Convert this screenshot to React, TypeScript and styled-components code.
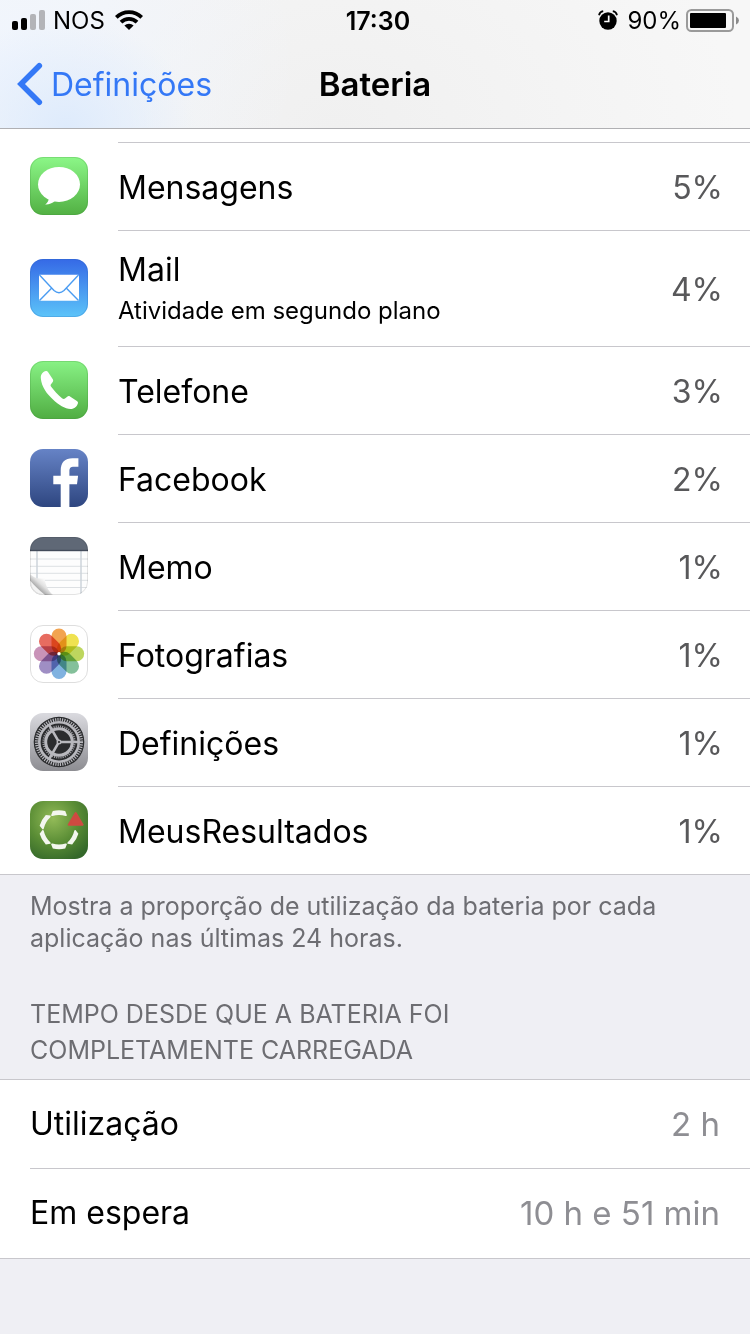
import React from 'react';
import styled, { createGlobalStyle } from 'styled-components';

const GlobalStyle = createGlobalStyle`
  *, *::before, *::after { box-sizing: border-box; }
  body {
    margin: 0;
    background: #efeff4;
    color: #000;
    font-family: Inter, "Liberation Sans", sans-serif;
  }
  ul, dl, dd, h1, h2, p { margin: 0; padding: 0; }
`;

const Page = styled.div`
  min-height: 100vh;
  display: flex;
  flex-direction: column;
`;

const Header = styled.header`
  border-bottom: 1px solid #b0b0b3;
  background:
    radial-gradient(ellipse 130px 110px at 66px 128px, #deebfc 0%, rgba(222, 235, 252, 0) 100%),
    radial-gradient(ellipse 300px 260px at 0 60px, #f0f5fd 0%, rgba(240, 245, 253, 0) 100%),
    radial-gradient(ellipse 400px 300px at 45% 128px, #f0f0f0 0%, rgba(247, 247, 247, 0) 100%),
    #f7f7f7;
`;

const StatusBar = styled.div`
  display: grid;
  grid-template-columns: 1fr auto 1fr;
  align-items: center;
  height: 40px;
  padding: 0 10px 0 12px;
  font-size: 24px;
  line-height: 32px;
`;

const StatusGroup = styled.div<{ $end?: boolean }>`
  display: flex;
  align-items: center;
  justify-content: ${p => (p.$end ? 'flex-end' : 'flex-start')};
  gap: ${p => (p.$end ? '5px' : '7px')};
`;

const Carrier = styled.span`
  padding: 2px 3px 0 0;
`;

const Percent = styled.span`
  padding: 2px 0 0 4px;
`;

const Clock = styled.time`
  padding: 2px 0 0 4px;
  font-size: 25px;
  font-weight: 600;
`;

const NavBar = styled.nav`
  display: grid;
  grid-template-columns: 1fr auto 1fr;
  align-items: center;
  height: 88px;
  padding: 0 17px;
`;

const BackLink = styled.a`
  display: flex;
  align-items: center;
  gap: 8px;
  justify-self: start;
  color: #3478f6;
  font-size: 32px;
  line-height: 40px;
  text-decoration: none;
`;

const BackLabel = styled.span`
  padding-top: 2px;
`;

const Title = styled.h1`
  font-size: 33px;
  line-height: 40px;
  font-weight: 600;
`;

const AppList = styled.ul`
  list-style: none;
  padding-top: 13px;
  background: #fff;
  border-bottom: 1px solid #c8c7cc;
`;

const AppRow = styled.li`
  display: flex;
  align-items: center;
  gap: 30px;
  padding-left: 30px;
`;

const AppBody = styled.div<{ $tall: boolean }>`
  flex: 1;
  display: flex;
  align-items: center;
  justify-content: space-between;
  min-height: ${p => (p.$tall ? '116px' : '88px')};
  padding: 2px 27px 0 0;
  border-top: 1px solid #c8c7cc;
`;

const AppName = styled.div`
  font-size: 32px;
  line-height: 40px;
`;

const AppNote = styled.div`
  padding: 5px 0 3px;
  font-size: 24px;
  line-height: 32px;
`;

const Share = styled.div`
  color: #58585a;
  font-size: 32px;
  line-height: 40px;
`;

const Note = styled.p`
  padding: 15px 30px 0;
  color: #6d6d72;
  font-size: 25px;
  line-height: 32px;
`;

const SectionTitle = styled.h2`
  max-width: 560px;
  padding: 42px 30px 11px;
  color: #6d6d72;
  font-size: 25px;
  line-height: 36px;
  font-weight: 400;
`;

const Stats = styled.dl`
  background: #fff;
  border-top: 1px solid #c8c7cc;
  border-bottom: 1px solid #c8c7cc;
  padding: 0 0 1px 30px;
`;

const Stat = styled.div`
  display: flex;
  align-items: center;
  justify-content: space-between;
  box-sizing: content-box;
  height: 88px;
  padding-right: 30px;
  font-size: 32px;
  line-height: 40px;
  & + & { border-top: 1px solid #c8c7cc; }
`;

const StatValue = styled.dd`
  color: #8e8e93;
  font-size: 33px;
`;

const IconSvg = styled.svg`
  display: block;
  flex: none;
  width: 58px;
  height: 58px;
`;

const ROUND = { width: 58, height: 58, rx: 13 };

function Gradient({ id, from, to }: { id: string; from: string; to: string }) {
  return (
    <linearGradient id={id} x1="0" y1="0" x2="0" y2="1">
      <stop offset="0" stopColor={from} />
      <stop offset="1" stopColor={to} />
    </linearGradient>
  );
}

function MessagesIcon() {
  return (
    <IconSvg viewBox="0 0 58 58" aria-hidden="true">
      <defs><Gradient id="msg" from="#8cf788" to="#52b043" /></defs>
      <rect {...ROUND} fill="url(#msg)" />
      <rect x=".5" y=".5" width="57" height="57" rx="12.5" fill="none" stroke="#3f8f3a" strokeOpacity=".25" />
      <ellipse cx="29" cy="27.4" rx="21" ry="17.5" fill="#fff" />
      <path d="M19 41C18.500 44 17.500 46 15.200 47.500C18.500 47.800 22 46.500 25 44Z" fill="#fff" />
    </IconSvg>
  );
}

function MailIcon() {
  return (
    <IconSvg viewBox="0 0 58 58" aria-hidden="true">
      <defs><Gradient id="mail" from="#3569e6" to="#5cc4f9" /></defs>
      <rect {...ROUND} fill="url(#mail)" />
      <rect x=".5" y=".5" width="57" height="57" rx="12.5" fill="none" stroke="#2b62b8" strokeOpacity=".25" />
      <rect x="9" y="15.700" width="40" height="26" rx="1" fill="#fff" />
      <g fill="none" stroke="#4a9cf2" strokeWidth="1.400">
        <path d="M9.500 16L24 31.500Q29 36 34 31.500L48.500 16" />
        <path d="M9.500 41.500L21.800 29M48.500 41.500L36.200 29" />
      </g>
    </IconSvg>
  );
}

function PhoneIcon() {
  return (
    <IconSvg viewBox="0 0 58 58" aria-hidden="true">
      <defs><Gradient id="phone" from="#88f285" to="#50ad42" /></defs>
      <rect {...ROUND} fill="url(#phone)" />
      <rect x=".5" y=".5" width="57" height="57" rx="12.5" fill="none" stroke="#3f8f3a" strokeOpacity=".25" />
      <path
        fill="#fff"
        d="M16 10C13 10.500 10.700 13 10.800 17C11.500 26 17 33 23 38.500C28.500 43.800 35 47.800 40.500 48C44.500 48 47 45.500 48 42C48 41 47.500 40.500 46.500 39.800L40 35.400C38.800 34.700 38 35 37.200 35.800L35 37.600C34 38.300 33 38 32 37.200C28 34 23.500 29 21 25.500C20.500 24.700 20.400 24 21 23.200L22.700 21C23.400 20 23.300 19.200 22.800 18.300L18 11C17.300 10 16.700 9.800 16 10Z"
      />
    </IconSvg>
  );
}

function FacebookIcon() {
  return (
    <IconSvg viewBox="0 0 58 58" aria-hidden="true">
      <defs><Gradient id="fb" from="#6683c6" to="#2e4680" /></defs>
      <rect {...ROUND} fill="url(#fb)" />
      <path
        fill="#fff"
        d="M30.700 58V35.300H23.300V26.700H30.700V21.500C30.700 13.500 35 9.300 42.500 9.300H48.400V17.800H44C40.500 17.800 39.400 19.200 39.400 22.300V26.700H48.100L47 35.300H39.400V58Z"
      />
    </IconSvg>
  );
}

function MemoIcon() {
  return (
    <IconSvg viewBox="0 0 58 58" aria-hidden="true">
      <defs>
        <clipPath id="memoClip"><rect {...ROUND} /></clipPath>
        <linearGradient id="curl" gradientUnits="userSpaceOnUse" x1="7" y1="50" x2="14" y2="42">
          <stop offset="0" stopColor="#b0b0b0" />
          <stop offset=".45" stopColor="#e0e0e0" />
          <stop offset="1" stopColor="#fafafa" />
        </linearGradient>
      </defs>
      <g clipPath="url(#memoClip)">
        <rect width="58" height="58" fill="#fdfdfd" />
        <path d="M0 22H58M0 29.300H58M0 36.300H58M0 43.300H58M0 50.500H58" stroke="#dde0e3" />
        <path d="M7 14V58M51 14V58" stroke="#ccd3da" strokeWidth="1.500" />
        <rect width="58" height="13.500" fill="#5f6876" />
        <rect y="12.800" width="58" height="1.400" fill="#434b5a" />
        <path d="M0 37C4 41 9 42.500 14.500 41C15.500 47 17 53 23 58H0Z" fill="url(#curl)" />
        <path d="M0 43.500C5 49 9 53 15 58H0Z" fill="#f4f4f4" />
      </g>
      <rect x=".5" y=".5" width="57" height="57" rx="12.5" fill="none" stroke="#000" strokeOpacity=".1" />
    </IconSvg>
  );
}

const PETALS = ['#f2a450', '#efe250', '#bdd65e', '#84c09a', '#80b2e0', '#9f8ec4', '#c993b8', '#e76c60'];

const Petal = styled.rect`
  mix-blend-mode: multiply;
`;

function PhotosIcon() {
  return (
    <IconSvg viewBox="0 0 58 58" aria-hidden="true">
      <rect x=".5" y=".5" width="57" height="57" rx="12.5" fill="#fff" stroke="#dedede" />
      {PETALS.map((color, i) => (
        <Petal
          key={color}
          x="21.5" y="3.500" width="15" height="25" rx="7.5"
          fill={color}
          transform={`rotate(${i * 45} 29 28.7)`}
        />
      ))}
      <circle cx="29" cy="28.700" r="1.700" fill="#fff" />
    </IconSvg>
  );
}

function SettingsIcon() {
  return (
    <IconSvg viewBox="0 0 58 58" aria-hidden="true">
      <defs><Gradient id="gear" from="#dadadf" to="#8d8d92" /></defs>
      <rect {...ROUND} fill="url(#gear)" />
      <circle cx="29" cy="29" r="25.300" fill="#2b2c2e" />
      <circle cx="29" cy="29" r="22.300" fill="none" stroke="#b8b8bd" strokeWidth="3.400" strokeDasharray="1.168 1.168" />
      <circle cx="29" cy="29" r="19.700" fill="none" stroke="#b8b8bd" strokeWidth="2.600" />
      <circle cx="29" cy="29" r="15.600" fill="none" stroke="#a2a2a7" strokeWidth="2" strokeDasharray="1.089 1.089" />
      <circle cx="29" cy="29" r="13.300" fill="none" stroke="#b8b8bd" strokeWidth="3" />
      <g stroke="#b8b8bd" strokeWidth="2.600">
        <path d="M31 29H50M28 27.300L18.500 10.800M28 30.700L18.500 47.200" />
      </g>
      <circle cx="29" cy="29" r="1.800" fill="#2b2c2e" stroke="#b8b8bd" strokeWidth="1.400" />
    </IconSvg>
  );
}

function ResultsIcon() {
  return (
    <IconSvg viewBox="0 0 58 58" aria-hidden="true">
      <defs>
        <radialGradient id="res" cx=".4" cy=".3" r=".78">
          <stop offset="0" stopColor="#93bb58" />
          <stop offset=".55" stopColor="#5a8d35" />
          <stop offset="1" stopColor="#34682a" />
        </radialGradient>
      </defs>
      <rect {...ROUND} fill="url(#res)" />
      {[30, 90, 150, 210, 270].map(angle => (
        <path
          key={angle}
          d="M43.500 20.800L47.800 22.500Q49.300 28.700 47.800 34.900L43.500 36.600Q42.500 36.500 42.800 35.200Q44.800 28.700 42.800 22.200Q42.500 20.900 43.500 20.800Z"
          transform={`rotate(${angle} 29 28.7)`}
          fill="#f3f6ee"
        />
      ))}
      <path d="M45.700 12L38.700 23.700H52.600Z" fill="#cf4a41" stroke="#cf4a41" strokeWidth="2" strokeLinejoin="round" />
    </IconSvg>
  );
}

const APPS: { name: string; note?: string; share: string; Icon: () => React.JSX.Element }[] = [
  { name: 'Mensagens', share: '5%', Icon: MessagesIcon },
  { name: 'Mail', note: 'Atividade em segundo plano', share: '4%', Icon: MailIcon },
  { name: 'Telefone', share: '3%', Icon: PhoneIcon },
  { name: 'Facebook', share: '2%', Icon: FacebookIcon },
  { name: 'Memo', share: '1%', Icon: MemoIcon },
  { name: 'Fotografias', share: '1%', Icon: PhotosIcon },
  { name: 'Definições', share: '1%', Icon: SettingsIcon },
  { name: 'MeusResultados', share: '1%', Icon: ResultsIcon },
];

const STATS = [
  { label: 'Utilização', value: '2 h' },
  { label: 'Em espera', value: '10 h e 51 min' },
];

function SignalGlyph() {
  return (
    <svg width="34" height="20" viewBox="0 0 34 20" aria-hidden="true">
      <rect x="0" y="11" width="6" height="9" rx="2" />
      <rect x="9" y="8" width="6" height="12" rx="2" />
      <rect x="18" y="4" width="6" height="16" rx="2" fill="#b3b4b8" />
      <rect x="27" y="0" width="6" height="20" rx="2" fill="#b3b4b8" />
    </svg>
  );
}

function WifiGlyph() {
  return (
    <svg width="28" height="20" viewBox="0 0 28 20" aria-hidden="true">
      <g fill="none" stroke="#000" strokeWidth="3.800">
        <path d="M1.300 7.300A18 18 0 0 1 26.700 7.300" />
        <path d="M6 12.200A11.300 11.300 0 0 1 22 12.200" />
      </g>
      <path d="M14 20L9.400 15.600A6.400 6.400 0 0 1 18.600 15.600Z" />
    </svg>
  );
}

function AlarmGlyph() {
  return (
    <svg width="20" height="20" viewBox="0 0 20 20" aria-hidden="true">
      <circle cx="10" cy="11" r="8.700" />
      <path d="M1 5.200Q1.800 1.800 5.200 1.200M14.800 1.200Q18.200 1.800 19 5.200" fill="none" stroke="#000" strokeWidth="1.700" />
      <path d="M10.700 5.500V11.500H6.200" fill="none" stroke="#fff" strokeWidth="1.700" />
    </svg>
  );
}

function BatteryGlyph() {
  return (
    <svg width="54" height="24" viewBox="0 0 54 24" aria-hidden="true">
      <rect x="1" y="2" width="46" height="21" rx="4.500" fill="none" stroke="#9a9a9a" strokeWidth="2" />
      <rect x="4" y="5" width="36" height="15" rx="1" />
      <path d="M50 8.500Q53 10 53 12.500T50 16.500Z" fill="#8a8a8a" />
    </svg>
  );
}

function BackGlyph() {
  return (
    <svg width="26" height="44" viewBox="0 0 26 44" aria-hidden="true">
      <path d="M22.300 3.700L4 22L22.300 40.300" fill="none" stroke="#3478f6" strokeWidth="5.600" strokeLinecap="round" strokeLinejoin="miter" />
    </svg>
  );
}

export default function App() {
  return (
    <Page>
      <GlobalStyle />
      <Header>
        <StatusBar>
          <StatusGroup>
            <SignalGlyph />
            <Carrier>NOS</Carrier>
            <WifiGlyph />
          </StatusGroup>
          <Clock>17:30</Clock>
          <StatusGroup $end>
            <AlarmGlyph />
            <Percent>90%</Percent>
            <BatteryGlyph />
          </StatusGroup>
        </StatusBar>
        <NavBar>
          <BackLink href="#definicoes">
            <BackGlyph />
            <BackLabel>Definições</BackLabel>
          </BackLink>
          <Title>Bateria</Title>
        </NavBar>
      </Header>
      <main>
        <AppList>
          {APPS.map(({ name, note, share, Icon }) => (
            <AppRow key={name}>
              <Icon />
              <AppBody $tall={Boolean(note)}>
                <div>
                  <AppName>{name}</AppName>
                  {note && <AppNote>{note}</AppNote>}
                </div>
                <Share>{share}</Share>
              </AppBody>
            </AppRow>
          ))}
        </AppList>
        <Note>Mostra a proporção de utilização da bateria por cada aplicação nas últimas 24 horas.</Note>
        <SectionTitle>TEMPO DESDE QUE A BATERIA FOI COMPLETAMENTE CARREGADA</SectionTitle>
        <Stats>
          {STATS.map(({ label, value }) => (
            <Stat key={label}>
              <dt>{label}</dt>
              <StatValue>{value}</StatValue>
            </Stat>
          ))}
        </Stats>
      </main>
    </Page>
  );
}
